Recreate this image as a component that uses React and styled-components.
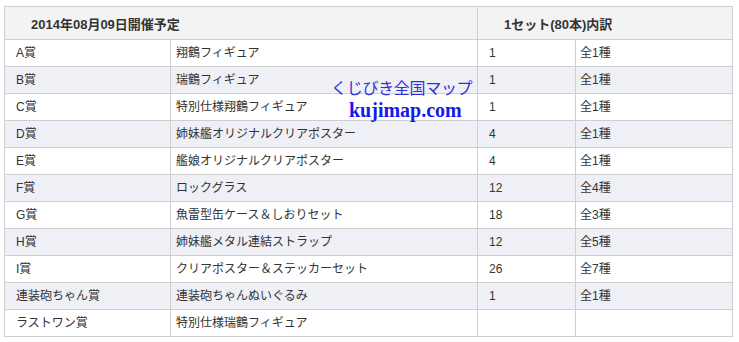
import React from "react";
import styled, { createGlobalStyle } from "styled-components";

const Global = createGlobalStyle`
  html, body { margin: 0; padding: 0; background: #fff; }
  body { font-family: "Liberation Sans", "Noto Sans CJK JP", sans-serif; }
`;

const Page = styled.div`
  position: relative;
  padding: 6px 0 0 4px;
  width: 739px;
  height: 342px;
  box-sizing: border-box;
`;

const Table = styled.table`
  border-collapse: collapse;
  table-layout: fixed;
  width: 728px;
  font-size: 12px;
  color: #333;
  font-family: "Liberation Sans", "Noto Sans CJK JP", sans-serif;
`;

const Th = styled.th`
  height: 32px;
  padding: 0 0 0 ${(p) => p.$pl}px;
  text-align: left;
  font-weight: bold;
  font-size: 13px;
  background: #f3f3f4;
  border: 1px solid #cfcfcf;
  color: #333;
`;

const Row = styled.tr`
  background: ${(p) => (p.$alt ? "#efeff6" : "#fff")};
`;

const Td = styled.td`
  height: 26px;
  padding: 0 0 0 ${(p) => p.$pl}px;
  border: 1px solid #cfcfcf;
  white-space: nowrap;
  line-height: 14px;
`;

const Watermark = styled.div`
  position: absolute;
  left: ${(p) => p.$x}px;
  top: ${(p) => p.$y}px;
  font-family: "Liberation Serif", "Noto Sans CJK JP", serif;
  font-size: ${(p) => p.$size}px;
  font-weight: ${(p) => (p.$bold ? "bold" : "normal")};
  color: ${(p) => p.$color};
  letter-spacing: ${(p) => p.$ls || 0}px;
  white-space: nowrap;
  pointer-events: none;
`;

const rows = [
  ["A賞", "翔鶴フィギュア", "1", "全1種"],
  ["B賞", "瑞鶴フィギュア", "1", "全1種"],
  ["C賞", "特別仕様翔鶴フィギュア", "1", "全1種"],
  ["D賞", "姉妹艦オリジナルクリアポスター", "4", "全1種"],
  ["E賞", "艦娘オリジナルクリアポスター", "4", "全1種"],
  ["F賞", "ロックグラス", "12", "全4種"],
  ["G賞", "魚雷型缶ケース＆しおりセット", "18", "全3種"],
  ["H賞", "姉妹艦メタル連結ストラップ", "12", "全5種"],
  ["I賞", "クリアポスター＆ステッカーセット", "26", "全7種"],
  ["連装砲ちゃん賞", "連装砲ちゃんぬいぐるみ", "1", "全1種"],
  ["ラストワン賞", "特別仕様瑞鶴フィギュア", "", ""],
];

export default function App() {
  return (
    <>
      <Global />
      <Page>
        <Table>
          <colgroup>
            <col style={{ width: 166 }} />
            <col style={{ width: 307 }} />
            <col style={{ width: 98 }} />
            <col style={{ width: 157 }} />
          </colgroup>
          <thead>
            <tr>
              <Th colSpan={2} $pl={26}>2014年08月09日開催予定</Th>
              <Th colSpan={2} $pl={26}>1セット(80本)内訳</Th>
            </tr>
          </thead>
          <tbody>
            {rows.map((r, i) => (
              <Row key={i} $alt={i % 2 === 1}>
                <Td $pl={11}>{r[0]}</Td>
                <Td $pl={5}>{r[1]}</Td>
                <Td $pl={11}>{r[2]}</Td>
                <Td $pl={4}>{r[3]}</Td>
              </Row>
            ))}
          </tbody>
        </Table>
        <Watermark $x={331} $y={75} $size={16} $color="#3030d8" $ls={-0.3}>
          くじびき全国マップ
        </Watermark>
        <Watermark $x={349} $y={99} $size={20} $bold $color="#1818e8">
          kujimap.com
        </Watermark>
      </Page>
    </>
  );
}
